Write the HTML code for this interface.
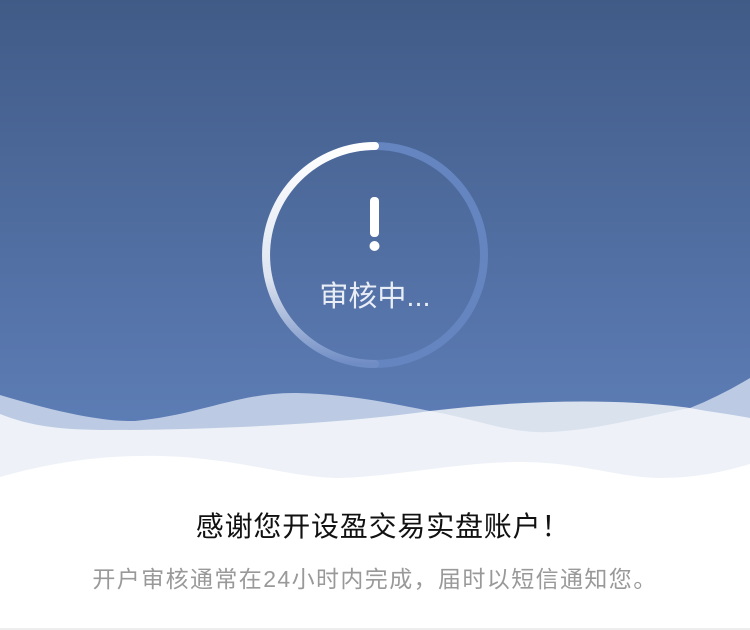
<!DOCTYPE html>
<html><head><meta charset="utf-8"><style>
html,body{margin:0;padding:0;width:750px;height:630px;overflow:hidden;background:#fff;font-family:"Liberation Sans","Noto Sans CJK SC",sans-serif}
.t1{position:absolute;left:8px;width:750px;top:507px;text-align:center;font-size:28px;letter-spacing:0.8px;color:#111;line-height:40px}
.t2{position:absolute;left:0;width:750px;top:561px;text-align:center;font-size:23px;letter-spacing:1.4px;color:#999;line-height:36px}
</style></head><body>
<svg width="750" height="630" style="position:absolute;left:0;top:0">
<defs>
<linearGradient id="bg" x1="0" y1="0" x2="0" y2="1"><stop offset="0" stop-color="#415b87"/><stop offset="1" stop-color="#5d7db6"/></linearGradient>
<linearGradient id="rw" x1="0" y1="0" x2="0" y2="1"><stop offset="0" stop-color="#ffffff"/><stop offset="0.6" stop-color="#dfe5f0"/><stop offset="1" stop-color="#6f8cc4"/></linearGradient>
</defs>
<rect width="750" height="430" fill="url(#bg)"/>
<path d="M0,395 C50,410 100,422 135,421 C200,415 240,392 297,393 C350,394 400,405 430,411 L690,408 C710,400 730,390 750,378 L750,630 L0,630Z" fill="#bccbe3"/>
<path d="M430,411 C520,400 620,398 690,408 C710,412 730,420 750,428 L750,630 L430,630Z" fill="#dae2ee"/>
<path d="M0,414 C30,426 60,430 110,430 C210,430 340,424 430,411 C480,420 510,434 550,432 C600,430 650,415 690,408 C710,412 730,414 750,418 L750,630 L0,630Z" fill="#eef2f8"/>
<path d="M0,477 C60,460 110,455 160,456 C240,458 290,478 340,478 C400,476 460,462 520,462 C580,462 620,478 660,478 C700,478 730,470 750,464 L750,630 L0,630Z" fill="#fff"/>
<circle cx="375" cy="255" r="109" fill="none" stroke="#6585c0" stroke-width="8"/>
<path d="M375,146 A109,109 0 0 0 375,364" fill="none" stroke="url(#rw)" stroke-width="8" stroke-linecap="round"/>
<rect x="370" y="197" width="9" height="40" rx="4" fill="#fff"/>
<circle cx="374.5" cy="246" r="5" fill="#fff"/>
<text x="375" y="306" text-anchor="middle" font-size="29" fill="#e8edf6" font-family="Liberation Sans,Noto Sans CJK SC,sans-serif">审核中...</text>
<rect x="0" y="628" width="750" height="2" fill="#eeeeee"/>
</svg>
<div class="t1">感谢您开设盈交易实盘账户！</div>
<div class="t2">开户审核通常在24小时内完成，届时以短信通知您。</div>
</body></html>
